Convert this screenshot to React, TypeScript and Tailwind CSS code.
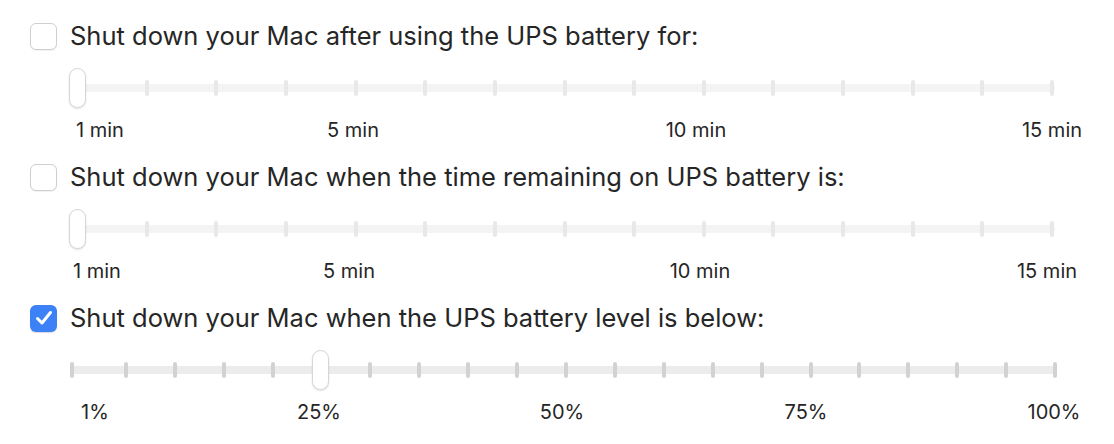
import React from 'react';

type Label = { text: string; x: number; align?: 'left' | 'center' };

type SliderSpec = {
  ticks: number[];
  trackFrom: number;
  trackTo: number;
  thumb: number;
  enabled: boolean;
  labels: Label[];
};

const minTicks = Array.from({ length: 15 }, (_, k) => 77 + k * ((1052 - 77) / 14));
const pctTicks = [72, ...Array.from({ length: 20 }, (_, k) => 126 + k * ((1055 - 126) / 19))];

const sections: { title: string; checked: boolean; slider: SliderSpec }[] = [
  {
    title: 'Shut down your Mac after using the UPS battery for:',
    checked: false,
    slider: {
      ticks: minTicks,
      trackFrom: 74,
      trackTo: 1055,
      thumb: 77,
      enabled: false,
      labels: [
        { text: '1 min', x: 76, align: 'left' },
        { text: '5 min', x: 353 },
        { text: '10 min', x: 696 },
        { text: '15 min', x: 1052 },
      ],
    },
  },
  {
    title: 'Shut down your Mac when the time remaining on UPS battery is:',
    checked: false,
    slider: {
      ticks: minTicks,
      trackFrom: 74,
      trackTo: 1055,
      thumb: 77,
      enabled: false,
      labels: [
        { text: '1 min', x: 73, align: 'left' },
        { text: '5 min', x: 349 },
        { text: '10 min', x: 700 },
        { text: '15 min', x: 1047 },
      ],
    },
  },
  {
    title: 'Shut down your Mac when the UPS battery level is below:',
    checked: true,
    slider: {
      ticks: pctTicks,
      trackFrom: 70,
      trackTo: 1057,
      thumb: 320,
      enabled: true,
      labels: [
        { text: '1%', x: 95 },
        { text: '25%', x: 319 },
        { text: '50%', x: 562 },
        { text: '75%', x: 806 },
        { text: '100%', x: 1054 },
      ],
    },
  },
];

function Checkbox({ checked }: { checked: boolean }) {
  if (checked) {
    return (
      <div className="w-[27px] h-[27px] rounded-[6px] bg-[#3c82f6] flex items-center justify-center shadow-[0_1px_1px_rgba(0,0,0,0.15)]">
        <svg width="18" height="16" viewBox="0 0 18 16" fill="none">
          <path d="M2.5 8.5 L7 13 L15.5 2.5" stroke="white" strokeWidth="3" strokeLinecap="round" strokeLinejoin="round" />
        </svg>
      </div>
    );
  }
  return (
    <div className="w-[27px] h-[27px] rounded-[6px] bg-white border border-[#cfcfcf] shadow-[0_1px_1px_rgba(0,0,0,0.06)]" />
  );
}

function Slider({ spec }: { spec: SliderSpec }) {
  const trackColor = spec.enabled ? 'bg-[#ececec]' : 'bg-[#f4f4f4]';
  const tickColor = spec.enabled ? 'bg-[#d2d2d2]' : 'bg-[#e8e8e8]';
  return (
    <div className="relative h-[40px] w-full">
      <div
        className={`absolute top-[16px] h-[8px] rounded-full ${trackColor}`}
        style={{ left: spec.trackFrom, width: spec.trackTo - spec.trackFrom }}
      />
      {spec.ticks.map((x, i) => (
        <div
          key={i}
          className={`absolute top-[12px] w-[4px] h-[16px] rounded-full ${tickColor}`}
          style={{ left: x - 2 }}
        />
      ))}
      <div
        className="absolute top-0 w-[17px] h-[40px] rounded-full bg-white border border-[#d6d6d6] shadow-[0_1px_2px_rgba(0,0,0,0.12)]"
        style={{ left: spec.thumb - 8.5 }}
      />
    </div>
  );
}

function Labels({ labels }: { labels: Label[] }) {
  return (
    <div className="relative h-[24px] w-full text-[20px] leading-[24px] text-[#262626]">
      {labels.map((l) => (
        <span
          key={l.text}
          className={`absolute top-0 whitespace-nowrap ${l.align === 'left' ? '' : '-translate-x-1/2'}`}
          style={{ left: l.x }}
        >
          {l.text}
        </span>
      ))}
    </div>
  );
}

export default function App() {
  return (
    <div
      className="w-[1114px] h-[444px] bg-white pt-[22px] overflow-hidden"
      style={{ fontFamily: 'Inter, "Liberation Sans", sans-serif' }}
    >
      {sections.map((s, i) => (
        <div key={i} className={`flex flex-col ${i > 0 ? 'mt-[21px]' : ''}`}>
          {/* Checkbox row */}
          <div className="flex items-center h-[28px] pl-[30px] gap-[13px]">
            <Checkbox checked={s.checked} />
            <span className="text-[25.5px] leading-[28px] text-[#262626] whitespace-nowrap">{s.title}</span>
          </div>
          <div className="mt-[18px]">
            <Slider spec={s.slider} />
          </div>
          <div className="mt-[10px]">
            <Labels labels={s.slider.labels} />
          </div>
        </div>
      ))}
    </div>
  );
}
